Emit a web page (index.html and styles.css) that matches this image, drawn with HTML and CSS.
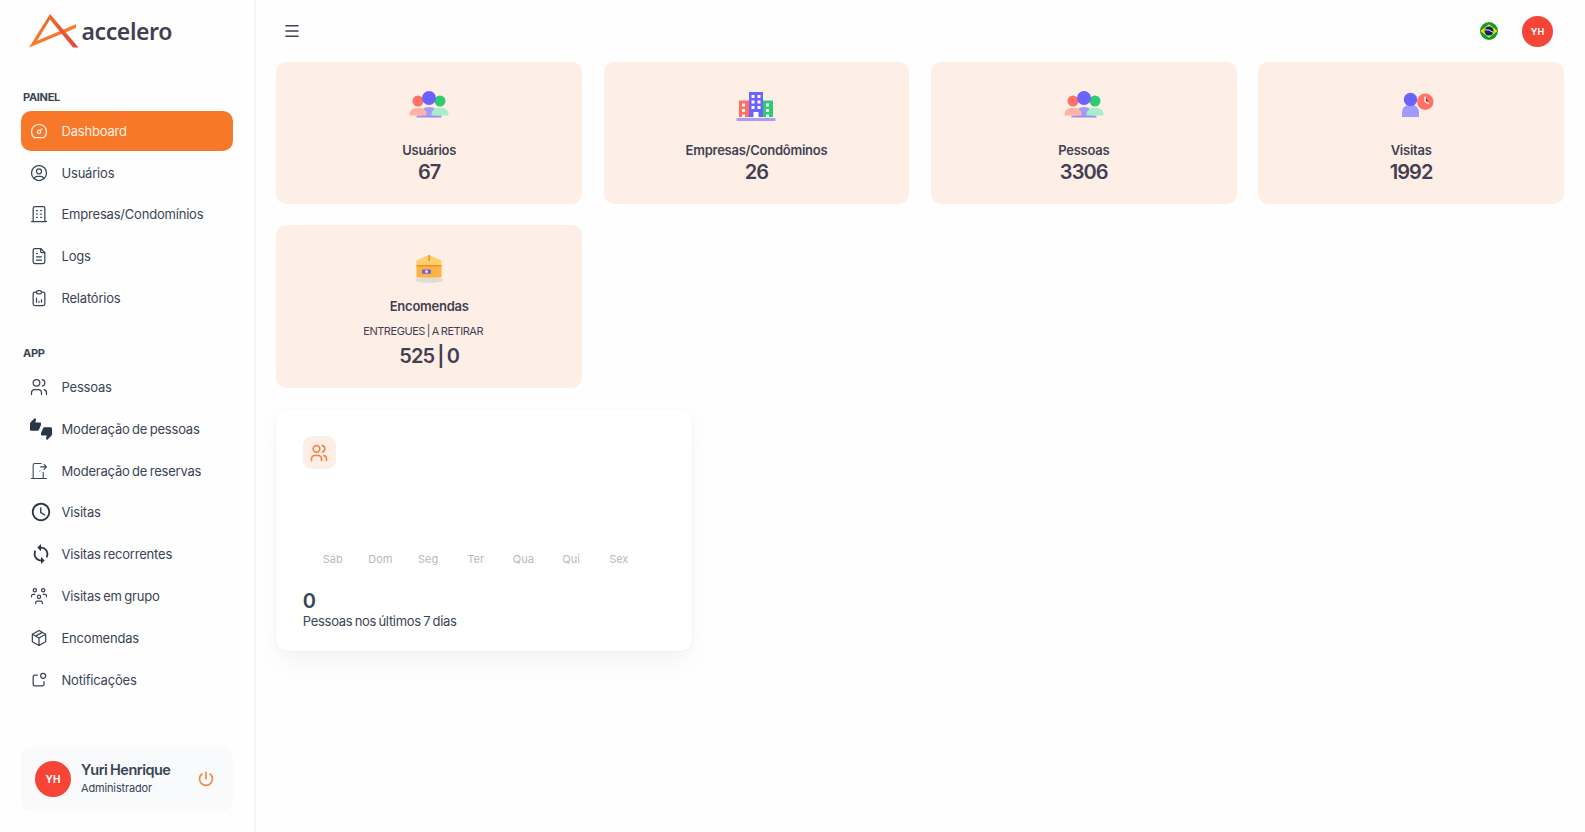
FILE: index.html
```html
<!DOCTYPE html>
<html lang="pt-BR">
<head>
    <meta charset="UTF-8">
    <meta name="viewport" content="width=device-width, initial-scale=1.0">
    <title>Accelero</title>
    <link rel="stylesheet" href="styles.css">
</head>
<body>

    <aside class="sidebar">
        <a class="logo" href="#">
            <svg width="50" height="34" viewBox="0 0 50 34">
                <defs>
                    <linearGradient id="logoFill" x1="0" y1="0" x2="1" y2="0">
                        <stop offset="0" stop-color="#f5822a"/>
                        <stop offset="1" stop-color="#e0453c"/>
                    </linearGradient>
                </defs>
                <path d="M0 33.5 L47 14 V10.3 L6 27.5 Z" fill="#f27b2e"/>
                <path d="M21 0 L0 33.5 L7 28.5 L21 5.5 L44 33.5 H49.5 Z" fill="url(#logoFill)"/>
            </svg>
            <span>accelero</span>
        </a>

        <nav>
            <h6>PAINEL</h6>
            <ul>
                <li class="active"><svg class="icon" viewBox="0 0 24 24"><circle cx="12" cy="13" r="2"/><path d="M13.45 11.55l2.05-2.05M6.4 20a9 9 0 1 1 11.2 0z"/></svg><span>Dashboard</span></li>
                <li><svg class="icon" viewBox="0 0 24 24"><circle cx="12" cy="12" r="9"/><circle cx="12" cy="10" r="3"/><path d="M6.17 18.85A4 4 0 0 1 10 16h4a4 4 0 0 1 3.83 2.86"/></svg><span>Usuários</span></li>
                <li><svg class="icon" viewBox="0 0 24 24"><path d="M3 21h18M9 8h1M9 12h1M9 16h1M14 8h1M14 12h1M14 16h1M5 21V5a2 2 0 0 1 2-2h10a2 2 0 0 1 2 2v16"/></svg><span>Empresas/Condomínios</span></li>
                <li><svg class="icon" viewBox="0 0 24 24"><path d="M14 3v4a1 1 0 0 0 1 1h4"/><path d="M17 21H7a2 2 0 0 1-2-2V5a2 2 0 0 1 2-2h7l5 5v11a2 2 0 0 1-2 2zM9 9h1M9 13h6M9 17h6"/></svg><span>Logs</span></li>
                <li><svg class="icon" viewBox="0 0 24 24"><path d="M9 5H7a2 2 0 0 0-2 2v12a2 2 0 0 0 2 2h10a2 2 0 0 0 2-2V7a2 2 0 0 0-2-2h-2"/><rect x="9" y="3" width="6" height="4" rx="2"/><path d="M9 17v-5M12 17v-1M15 17v-3"/></svg><span>Relatórios</span></li>
            </ul>

            <h6>APP</h6>
            <ul class="app-list">
                <li><svg class="icon" viewBox="0 0 24 24"><circle cx="9" cy="7" r="4"/><path d="M3 21v-2a4 4 0 0 1 4-4h4a4 4 0 0 1 4 4v2M16 3.13a4 4 0 0 1 0 7.75M21 21v-2a4 4 0 0 0-3-3.85"/></svg><span>Pessoas</span></li>
                <li><svg class="icon filled" viewBox="0 0 24 24"><path d="M12 6c0-.55-.45-1-1-1H5.82l.66-3.18.02-.23c0-.31-.13-.59-.33-.8L5.38 0 .44 4.94C.17 5.21 0 5.59 0 6v6.5c0 .83.67 1.5 1.5 1.5h6.75c.62 0 1.15-.38 1.38-.91l2.26-5.29c.07-.17.11-.36.11-.55V6zm10.5 4h-6.75c-.62 0-1.15.38-1.38.91l-2.26 5.29c-.07.17-.11.36-.11.55V18c0 .55.45 1 1 1h5.18l-.66 3.18-.02.24c0 .31.13.59.33.8l.79.78 4.94-4.94c.27-.27.44-.65.44-1.06v-6.5c0-.83-.67-1.5-1.5-1.5z"/></svg><span>Moderação de pessoas</span></li>
                <li><svg class="icon thin" viewBox="0 0 24 24"><path d="M13 12v.01M3 21h18M5 21V5a2 2 0 0 1 2-2h7.5M17 13.5V21M14 7h7M18 4l3 3-3 3"/></svg><span>Moderação de reservas</span></li>
                <li><svg class="icon filled" viewBox="0 0 24 24"><path d="M11.99 2C6.47 2 2 6.48 2 12s4.47 10 9.99 10C17.52 22 22 17.52 22 12S17.52 2 11.99 2zM12 20c-4.42 0-8-3.58-8-8s3.58-8 8-8 8 3.58 8 8-3.58 8-8 8zm.5-13H11v6l5.25 3.15.75-1.23-4.5-2.67z"/></svg><span>Visitas</span></li>
                <li><svg class="icon filled" viewBox="0 0 24 24"><path d="M12 4V1L8 5l4 4V6c3.31 0 6 2.69 6 6 0 1.01-.25 1.97-.7 2.8l1.46 1.46C19.54 15.03 20 13.57 20 12c0-4.42-3.58-8-8-8zm0 14c-3.31 0-6-2.69-6-6 0-1.01.25-1.97.7-2.8L5.24 7.74C4.46 8.97 4 10.43 4 12c0 4.42 3.58 8 8 8v3l4-4-4-4v3z"/></svg><span>Visitas recorrentes</span></li>
                <li><svg class="icon" viewBox="0 0 24 24"><circle cx="12" cy="13" r="2"/><path d="M8 21v-1a2 2 0 0 1 2-2h4a2 2 0 0 1 2 2v1"/><circle cx="17" cy="5" r="2"/><path d="M17 10h2a2 2 0 0 1 2 2v1"/><circle cx="7" cy="5" r="2"/><path d="M3 13v-1a2 2 0 0 1 2-2h2"/></svg><span>Visitas em grupo</span></li>
                <li><svg class="icon" viewBox="0 0 24 24"><path d="M12 3l8 4.5v9L12 21l-8-4.5v-9zM12 12l8-4.5M12 12v9M12 12L4 7.5M16 5.25l-8 4.5"/></svg><span>Encomendas</span></li>
                <li><svg class="icon" viewBox="0 0 24 24"><path d="M10 6H7a2 2 0 0 0-2 2v9a2 2 0 0 0 2 2h9a2 2 0 0 0 2-2v-3"/><circle cx="17" cy="7" r="3"/></svg><span>Notificações</span></li>
            </ul>
        </nav>

        <div class="profile">
            <div class="avatar">YH</div>
            <div class="profile-info">
                <strong>Yuri Henrique</strong>
                <small>Administrador</small>
            </div>
            <svg class="icon power" viewBox="0 0 24 24"><path d="M7 6a7.75 7.75 0 1 0 10 0M12 4v8"/></svg>
        </div>
    </aside>

    <main>
        <header>
            <svg class="icon menu" viewBox="0 0 24 24"><path d="M4 5h16M4 12h16M4 19h16"/></svg>
            <div class="header-right">
                <svg class="flag" viewBox="0 0 18 18">
                    <circle cx="9" cy="9" r="9" fill="#149b2e"/>
                    <path d="M9 2.2L17.5 9 9 15.8.5 9z" fill="#fedf00"/>
                    <circle cx="9" cy="9" r="4.5" fill="#0b2377"/>
                    <path d="M4.9 7.8q4.5-.6 8.2 2.5" fill="none" stroke="#fff" stroke-width=".9"/>
                </svg>
                <div class="avatar small">YH</div>
            </div>
        </header>

        <section class="cards">
            <div class="card">
                <svg class="card-icon" viewBox="0 0 40 40"><use href="#people"/></svg>
                <h5>Usuários</h5>
                <h4>67</h4>
            </div>
            <div class="card">
                <svg class="card-icon" viewBox="0 0 40 40">
                    <path d="M3 14.5h10V31H3z" fill="#ff7064"/>
                    <path d="M26 14.5h11V31H26z" fill="#2ecc71"/>
                    <path d="M13 6h14v25H13z" fill="#6c63ff"/>
                    <path d="M15.5 9h3v3h-3zM21.5 9h3v3h-3zM15.5 14.5h3v3h-3zM21.5 14.5h3v3h-3zM15.5 20h3v3h-3zM21.5 20h3v3h-3zM17.5 26h5v5h-5zM6 17.5h3v3H6zM6 23h3v3H6zM6 28.5h3V31H6zM30 17.5h3v3h-3zM30 23h3v3h-3zM30 28.5h3V31h-3z" fill="#fff"/>
                    <rect x=".5" y="32" width="39" height="3" rx=".5" fill="#a89cf4"/>
                </svg>
                <h5>Empresas/Condôminos</h5>
                <h4>26</h4>
            </div>
            <div class="card">
                <svg class="card-icon" viewBox="0 0 40 40"><use href="#people"/></svg>
                <h5>Pessoas</h5>
                <h4>3306</h4>
            </div>
            <div class="card">
                <svg class="card-icon" viewBox="0 0 40 40">
                    <path d="M11 31v-5a7 7 0 0 1 7-7h3a7 7 0 0 1 7 7v5z" fill="#a29bfe"/>
                    <circle cx="19.5" cy="13.5" r="6.7" fill="#6c63ff"/>
                    <circle cx="34.3" cy="15.8" r="8.2" fill="#ff7065"/>
                    <path d="M34 10.5v5l4 2.5" fill="none" stroke="#fff" stroke-width="1.3"/>
                    <path d="M35 12.5l2.3 3-2.3-.4z" fill="#402c3c"/>
                </svg>
                <h5>Visitas</h5>
                <h4>1992</h4>
            </div>
            <div class="card tall">
                <svg class="card-icon" viewBox="0 0 40 40">
                    <ellipse cx="20" cy="31" rx="14" ry="3" fill="#e0dbd5"/>
                    <path d="M7.5 16h25v12.5h-25z" fill="#ffb142"/>
                    <path d="M7.5 16v-4.5L20 6l12.5 5.5V16z" fill="#ffcf6e"/>
                    <path d="M7.5 16h25v1.5h-25z" fill="#e6962a"/>
                    <path d="M19.5 6h1.2v6h-1.2z" fill="#c98a2c"/>
                    <rect x="13" y="20.5" width="9" height="4.2" rx=".8" fill="#7161dc"/>
                    <circle cx="17.5" cy="22.6" r="1.3" fill="#fff"/>
                </svg>
                <h5>Encomendas</h5>
                <p>ENTREGUES | A RETIRAR</p>
                <h4>525 | 0</h4>
            </div>
        </section>

        <section class="chart-card">
            <div class="badge">
                <svg class="icon" viewBox="0 0 24 24"><circle cx="9" cy="7" r="4"/><path d="M3 21v-2a4 4 0 0 1 4-4h4a4 4 0 0 1 4 4v2M16 3.13a4 4 0 0 1 0 7.75M21 21v-2a4 4 0 0 0-3-3.85"/></svg>
            </div>
            <div class="days">
                <span>Sáb</span><span>Dom</span><span>Seg</span><span>Ter</span><span>Qua</span><span>Qui</span><span>Sex</span>
            </div>
            <h4>0</h4>
            <p>Pessoas nos últimos 7 dias</p>
        </section>
    </main>

    <svg class="defs">
        <symbol id="people" viewBox="0 0 40 40">
            <path d="M12 27c1-3 2-6 8-6s7 3 8 6v3.5H12z" fill="#a29bfe"/>
            <path d="M7.5 29.5h25v2h-25z" fill="#9c8ff0"/>
            <path d="M.5 29.5v-1c0-4 3-6.5 6.5-6.5h4c3.500 0 6.500 2.500 6.500 6.500v1z" fill="#ffb3a7"/>
            <path d="M22.5 29.5v-1c0-4 3-6.500 6.500-6.500h4c3.500 0 6.500 2.500 6.500 6.500v1z" fill="#a8eec8"/>
            <circle cx="9" cy="15" r="5.5" fill="#ff7065"/>
            <circle cx="31" cy="15" r="5.5" fill="#2ecc71"/>
            <circle cx="20" cy="12" r="7" fill="#6c63ff"/>
        </symbol>
    </svg>

</body>
</html>
```
FILE: styles.css
```css
* {
    box-sizing: border-box;
}

body {
    display: flex;
    margin: 0;
    height: 832px;
    overflow: hidden;
    font-family: Inter, sans-serif;
    color: #3a4454;
    background-color: #fefefe;
}

h4, h5, h6, p, ul {
    margin: 0;
    padding: 0;
    font-weight: 400;
}

/* Tabler style outline icons */
.icon {
    width: 20px;
    height: 20px;
    flex: none;
    fill: none;
    stroke: currentColor;
    stroke-width: 1.5;
    stroke-linecap: round;
    stroke-linejoin: round;
}

.icon.thin {
    stroke-width: 1.3;
}

.icon.filled {
    width: 22px;
    height: 22px;
    margin-left: 0.5px;
    color: #2a3547;
    fill: currentColor;
    stroke: none;
}

.defs {
    display: none;
}

/* Sidebar */
.sidebar {
    display: flex;
    flex-direction: column;
    width: 256px;
    flex: none;
    padding: 14px 21px 21px 21px;
    border-right: 2px solid #f4f6f8;
}

.logo {
    display: flex;
    height: 34px;
    padding-left: 8px;
    color: #433f53;
    text-decoration: none;
}

.logo span {
    margin-left: 2.5px;
    font-family: "Noto Sans", sans-serif;
    font-size: 23px;
    font-weight: 600;
    line-height: 34px;
    letter-spacing: -0.4px;
}

nav h6 {
    height: 14px;
    margin-top: 42px;
    padding-left: 2px;
    font-size: 11px;
    font-weight: 700;
    line-height: 14px;
    letter-spacing: -0.3px;
}

nav ul {
    margin-top: 7px;
    list-style: none;
}

nav ul + h6 {
    margin-top: 28px;
}

nav li {
    display: flex;
    align-items: center;
    height: 40px;
    margin-bottom: 1.7px;
    padding-left: 8px;
    border-radius: 10px;
    font-size: 13px;
    letter-spacing: -0.2px;
    word-spacing: -1px;
}

.app-list li {
    margin-bottom: 1.9px;
}

nav li span {
    margin-left: 12.5px;
}

nav li .filled + span {
    margin-left: 10px;
}

nav li.active {
    color: #fff0e4;
    background-color: #f67828;
}

.profile {
    display: flex;
    align-items: center;
    height: 64px;
    margin-top: auto;
    padding: 0 17px 0 14px;
    border-radius: 10px;
    background-color: #f8fafc;
}

.avatar {
    width: 36px;
    height: 36px;
    border-radius: 50%;
    color: #fff;
    background-color: #f64437;
    font-size: 10px;
    font-weight: 700;
    line-height: 36px;
    text-align: center;
}

.avatar.small {
    width: 31px;
    height: 31px;
    font-size: 9px;
    line-height: 31px;
}

.profile-info {
    flex: 1;
    margin-left: 10px;
}

.profile-info strong,
.profile-info small {
    display: block;
}

.profile-info strong {
    font-size: 14.5px;
    font-weight: 600;
    line-height: 18px;
    letter-spacing: -0.5px;
    word-spacing: -0.5px;
}

.profile-info small {
    font-size: 11px;
    line-height: 18px;
    letter-spacing: -0.15px;
}

.power {
    width: 20px;
    height: 20px;
    color: #f08a45;
    stroke-width: 2;
}

/* Content */
main {
    flex: 1;
    padding: 0 21px 0 20.3px;
}

header {
    display: flex;
    align-items: center;
    justify-content: space-between;
    height: 62px;
    padding: 0 11px 0 7px;
}

.menu {
    width: 18px;
    height: 18px;
    stroke-width: 2.2;
}

.header-right {
    display: flex;
    align-items: center;
    gap: 24px;
}

.flag {
    width: 18px;
    height: 18px;
}

.cards {
    display: grid;
    grid-template-columns: repeat(4, 1fr);
    gap: 21.5px;
}

.card {
    height: 141.5px;
    padding-top: 24px;
    border-radius: 10px;
    color: #433f53;
    background-color: #feefe6;
    text-align: center;
}

.card.tall {
    height: 163px;
}

.card-icon {
    display: block;
    width: 40px;
    height: 40px;
    margin: 0 auto;
    overflow: visible;
}

.card h5 {
    margin-top: 15px;
    font-size: 13px;
    font-weight: 600;
    line-height: 19px;
    letter-spacing: -0.25px;
}

.card h4 {
    font-size: 20px;
    font-weight: 600;
    line-height: 25px;
    letter-spacing: -0.9px;
    word-spacing: -1px;
}

.card.tall h5 {
    margin-top: 8px;
}

.card.tall p {
    margin: 6px 12px 3px 0;
    font-size: 11px;
    line-height: 19px;
    letter-spacing: -0.45px;
    word-spacing: -0.8px;
}

.chart-card {
    width: 415.5px;
    height: 241.5px;
    margin-top: 21.5px;
    padding: 26.5px;
    border-radius: 10px;
    background-color: #fff;
    box-shadow: 0 0 2px rgba(145, 158, 171, 0.2), 0 12px 24px -4px rgba(145, 158, 171, 0.12);
}

.badge {
    display: flex;
    align-items: center;
    justify-content: center;
    width: 33px;
    height: 33px;
    border-radius: 9px;
    color: #f08040;
    background-color: #feefe6;
}

.badge .icon {
    stroke-width: 1.9;
}

.days {
    display: grid;
    grid-template-columns: repeat(7, 47.7px);
    margin: 80.5px 0 0 6px;
    color: #b5b9bf;
    font-size: 11px;
    line-height: 18px;
    text-align: center;
}

.chart-card h4 {
    margin-top: 20px;
    font-size: 20px;
    font-weight: 600;
    line-height: 26px;
}

.chart-card p {
    font-size: 13px;
    line-height: 15px;
    letter-spacing: -0.3px;
    word-spacing: -1px;
}
```
